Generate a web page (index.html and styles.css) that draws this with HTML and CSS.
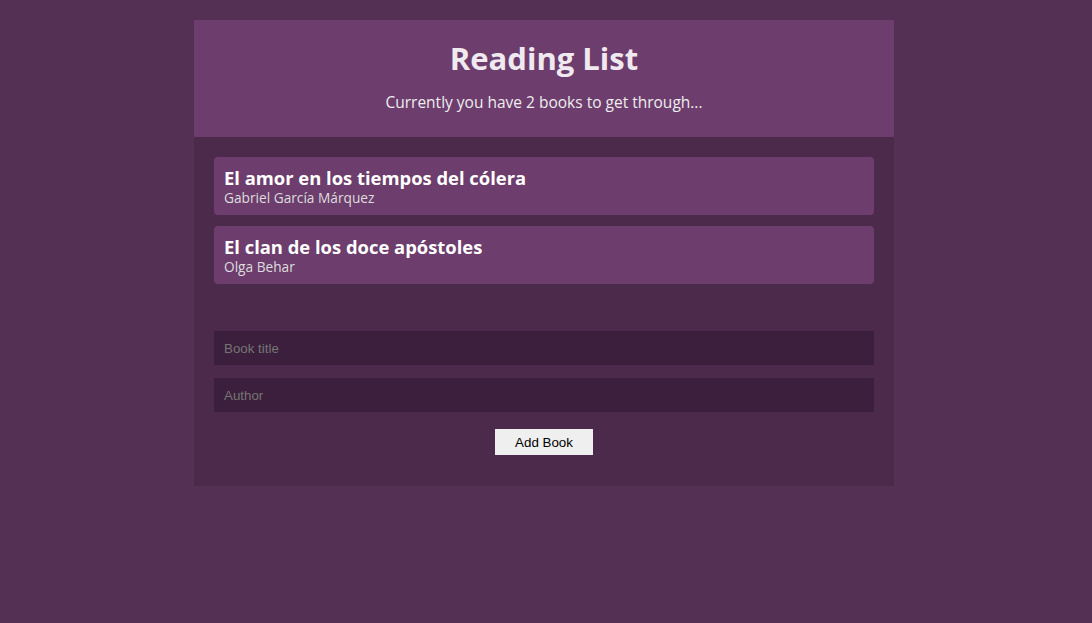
FILE: index.html
```html
<!DOCTYPE html>
<html>
<head>
<meta charset="utf-8">
<link rel="stylesheet" href="styles.css">
</head>
<body>
<div class="app">
  <header class="navbar">
    <h1 class="navbar-title">Reading List</h1>
    <p class="navbar-sub">Currently you have 2 books to get through...</p>
  </header>
  <section class="book-list">
    <ul class="books">
      <li class="book">
        <div class="book-title">El amor en los tiempos del cólera</div>
        <div class="book-author">Gabriel García Márquez</div>
      </li>
      <li class="book">
        <div class="book-title">El clan de los doce apóstoles</div>
        <div class="book-author">Olga Behar</div>
      </li>
    </ul>
  </section>
  <form class="book-form">
    <input class="field" type="text" placeholder="Book title">
    <input class="field" type="text" placeholder="Author">
    <input class="submit" type="submit" value="Add Book">
  </form>
</div>
</body>
</html>
```

FILE: styles.css
```css
html, body {
  margin: 0;
  padding: 0;
}
body {
  background: #553055;
  font-family: "Open Sans", "Noto Sans", sans-serif;
  padding: 20px 4px 0 0;
}
.app {
  width: 700px;
  margin: 0 auto;
  background: #4c2a4c;
  color: #eee;
  display: flex;
  flex-direction: column;
}
.navbar {
  background: #6d3d6d;
  height: 117px;
  box-sizing: border-box;
  padding-top: 20px;
  text-align: center;
}
.navbar-title {
  margin: 0;
  font-size: 31px;
  line-height: 37px;
  font-weight: 700;
  color: #f0eaf0;
}
.navbar-sub {
  margin: 16px 0 0;
  font-size: 15.5px;
  line-height: 18px;
  color: #eee;
}
.book-list {
  padding: 20px 20px 0;
}
.books {
  list-style: none;
  margin: 0;
  padding: 0;
  display: flex;
  flex-direction: column;
  gap: 11px;
}
.book {
  background: #6d3d6d;
  border-radius: 4px;
  height: 58px;
  box-sizing: border-box;
  padding: 10px 10px 0;
}
.book-title {
  font-weight: 700;
  font-size: 18.4px;
  line-height: 22px;
  color: #fff;
}
.book-author {
  font-size: 13.7px;
  line-height: 17px;
  color: #ddd;
}
.book-form {
  padding: 47px 20px 31px;
  display: flex;
  flex-direction: column;
}
.field {
  height: 34px;
  box-sizing: border-box;
  padding: 0 10px;
  border: 0;
  margin: 0 0 13px;
  background: #3c1f3c;
  color: #fff;
  font-family: "Liberation Sans", Arial, sans-serif;
  font-size: 13.33px;
  outline: none;
}
.field::placeholder {
  color: #757575;
}
.submit {
  align-self: center;
  margin-top: 4px;
  width: 98px;
  height: 26px;
  border: 0;
  padding: 0;
  background: #efefef;
  color: #000;
  font-family: "Liberation Sans", Arial, sans-serif;
  font-size: 13.33px;
}
```
